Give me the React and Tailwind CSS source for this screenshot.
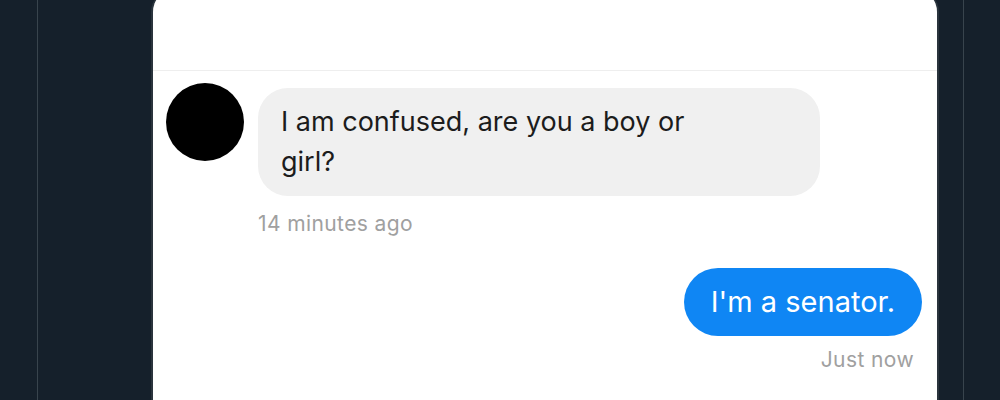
import React from 'react';

export default function App() {
  return (
    <div
      className="w-[1000px] h-[400px] overflow-hidden bg-[#15202b] flex"
      style={{ fontFamily: 'Inter, "Noto Sans", sans-serif' }}
    >
      <div className="w-[37px] shrink-0" />
      <div className="w-px shrink-0 bg-[#38444d]" />
      <div className="flex-1 flex pl-[113px] pr-[24px]">
        <div className="flex-1 -mt-[10px] bg-white rounded-t-[22px] border-x-2 border-[#2a343d] flex flex-col">
          <div className="h-[81px] border-b border-[#eeeeee] shrink-0" />
          <div className="flex items-start gap-[14px] pl-[13px] pt-[12px]">
            <div className="w-[78px] h-[78px] rounded-full bg-black shrink-0" />
            <div className="flex flex-col pt-[5px]">
              <div className="w-[562px] h-[108px] bg-[#f0f0f0] rounded-[30px] pl-[23px] pr-[100px] pt-[14px] text-[27px] leading-[40px] text-[#1c1c1c]">
                I am confused, are you a boy or girl?
              </div>
              <div className="mt-[12px] text-[21px] tracking-[0.4px] text-[#a0a0a0]">14 minutes ago</div>
            </div>
          </div>
          <div className="flex flex-col items-end pr-[15px] mt-[28px]">
            <div className="h-[68px] rounded-full bg-[#0f86f4] text-white text-[29px] flex items-center px-[27px]">
              I'm a senator.
            </div>
            <div className="mt-[8px] mr-[8px] text-[21px] tracking-[0.4px] text-[#a0a0a0]">Just now</div>
          </div>
        </div>
      </div>
      <div className="w-px shrink-0 bg-[#38444d]" />
      <div className="w-[36px] shrink-0" />
    </div>
  );
}
